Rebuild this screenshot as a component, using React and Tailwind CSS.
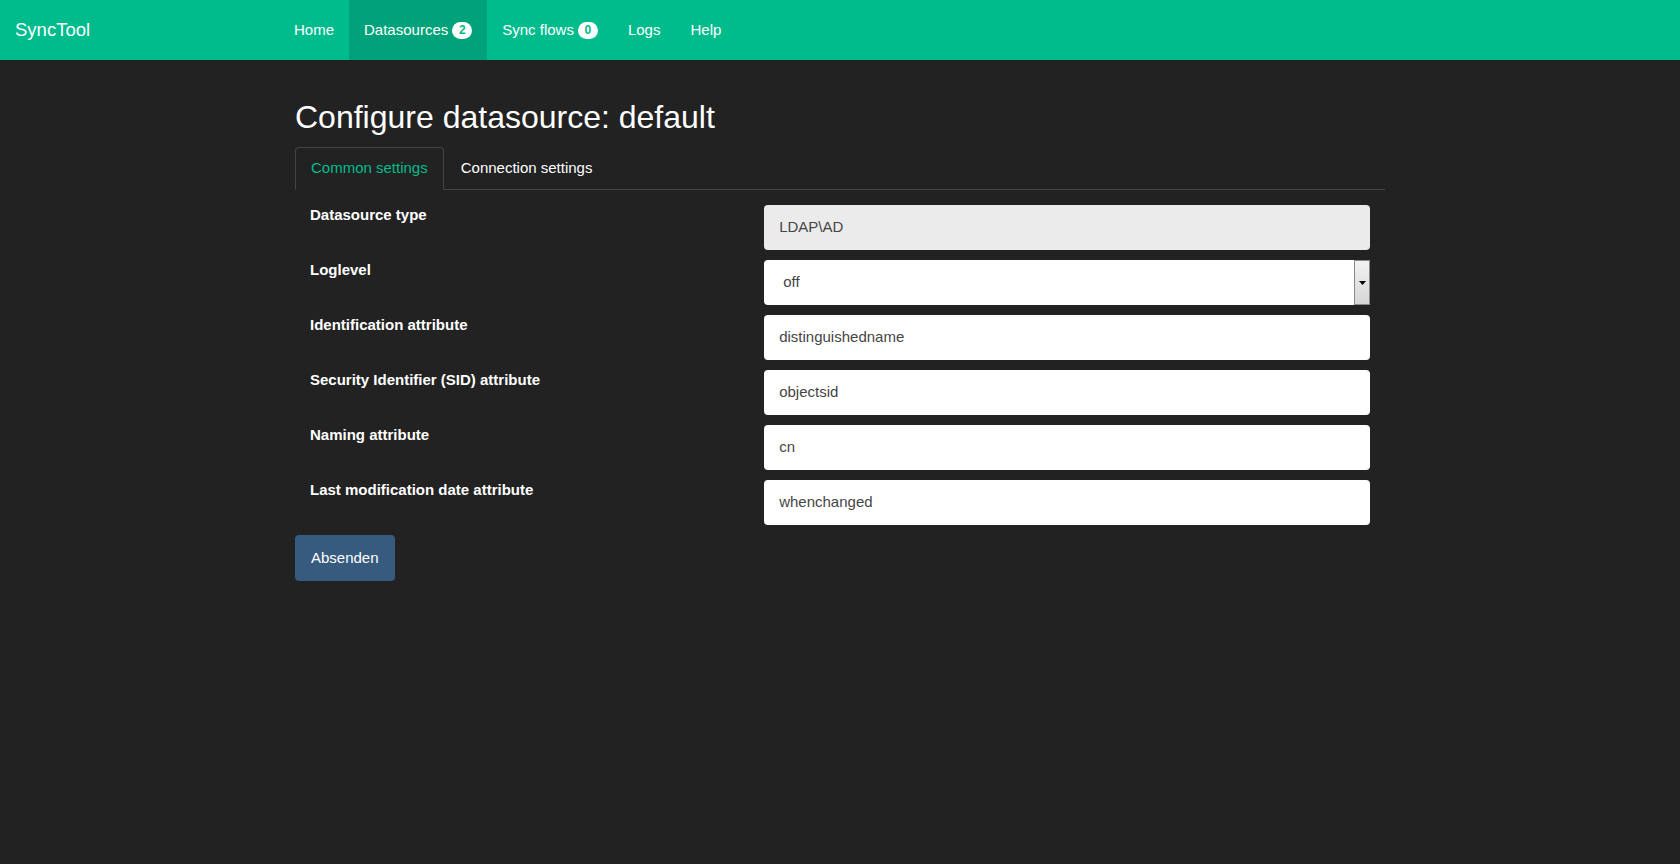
import React from 'react'

const font = { fontFamily: '"Liberation Sans", Arial, sans-serif' }

const NavLink = ({ label, badge, active }) => (
  <a
    href="#"
    className={`flex items-center h-full px-[15px] text-[15px] text-white ${active ? 'bg-[#00a379]' : ''}`}
  >
    {label}
    {badge !== undefined && (
      <span className="ml-[4px] inline-flex items-center justify-center h-[17px] w-[20px] rounded-[10px] bg-white text-[#00bc8c] text-[12px] font-bold leading-none">
        {badge}
      </span>
    )}
  </a>
)

const Field = ({ label, children }) => (
  <div className="grid grid-cols-12 mb-[10px]">
    <label className="col-span-5 px-[15px] text-[15px] font-bold text-white leading-[20px]">{label}</label>
    <div className="col-span-7 px-[15px]">{children}</div>
  </div>
)

const Input = ({ value, disabled }) => (
  <div
    className={`h-[45px] flex items-center px-[15px] rounded-[4px] text-[15px] text-[#464545] ${disabled ? 'bg-[#ebebeb]' : 'bg-white'}`}
  >
    {value}
  </div>
)

const Select = ({ value }) => (
  <div className="h-[45px] flex items-stretch rounded-l-[4px] bg-white text-[15px] text-[#464545]">
    <div className="flex-1 flex items-center pl-[19px]">{value}</div>
    <div className="w-[16px] border border-[#8a8a8a] bg-gradient-to-b from-[#f2f2f2] to-[#d6d6d6] flex items-center justify-center">
      <svg width="7" height="4" viewBox="0 0 7 4">
        <path d="M0 0h7L3.5 4z" fill="#000" />
      </svg>
    </div>
  </div>
)

export default function App() {
  return (
    <div className="min-h-[864px] bg-[#222222]" style={font}>
      {/* Navbar */}
      <nav className="h-[60px] bg-[#00bc8c] flex items-stretch">
        <a href="#" className="w-[279px] flex items-center pl-[15px] text-[18.5px] text-white">SyncTool</a>
        <div className="flex items-stretch">
          <NavLink label="Home" />
          <NavLink label="Datasources" badge={2} active />
          <NavLink label="Sync flows" badge={0} />
          <NavLink label="Logs" />
          <NavLink label="Help" />
        </div>
      </nav>

      <div className="w-[1090px] mx-auto">
        <h1 className="mt-[40px] text-[32px] leading-[35px] text-white">Configure datasource: default</h1>

        {/* Tabs */}
        <div className="mt-[12px] flex border-b border-[#444444]">
          <a href="#" className="-mb-px px-[15px] py-[10px] text-[15px] leading-[20px] text-[#00bc8c] border border-[#444444] border-b-[#222222] rounded-t-[4px] bg-[#222222]">
            Common settings
          </a>
          <a href="#" className="ml-[2px] px-[14px] py-[10px] text-[15px] leading-[20px] text-white border border-transparent">
            Connection settings
          </a>
        </div>

        {/* Form */}
        <div className="pt-[15px]">
          <Field label="Datasource type"><Input value="LDAP\AD" disabled /></Field>
          <Field label="Loglevel"><Select value="off" /></Field>
          <Field label="Identification attribute"><Input value="distinguishedname" /></Field>
          <Field label="Security Identifier (SID) attribute"><Input value="objectsid" /></Field>
          <Field label="Naming attribute"><Input value="cn" /></Field>
          <Field label="Last modification date attribute"><Input value="whenchanged" /></Field>
          <button className="h-[46px] px-[16px] rounded-[4px] bg-[#375a7f] text-white text-[15px]">
            Absenden
          </button>
        </div>
      </div>
    </div>
  )
}
